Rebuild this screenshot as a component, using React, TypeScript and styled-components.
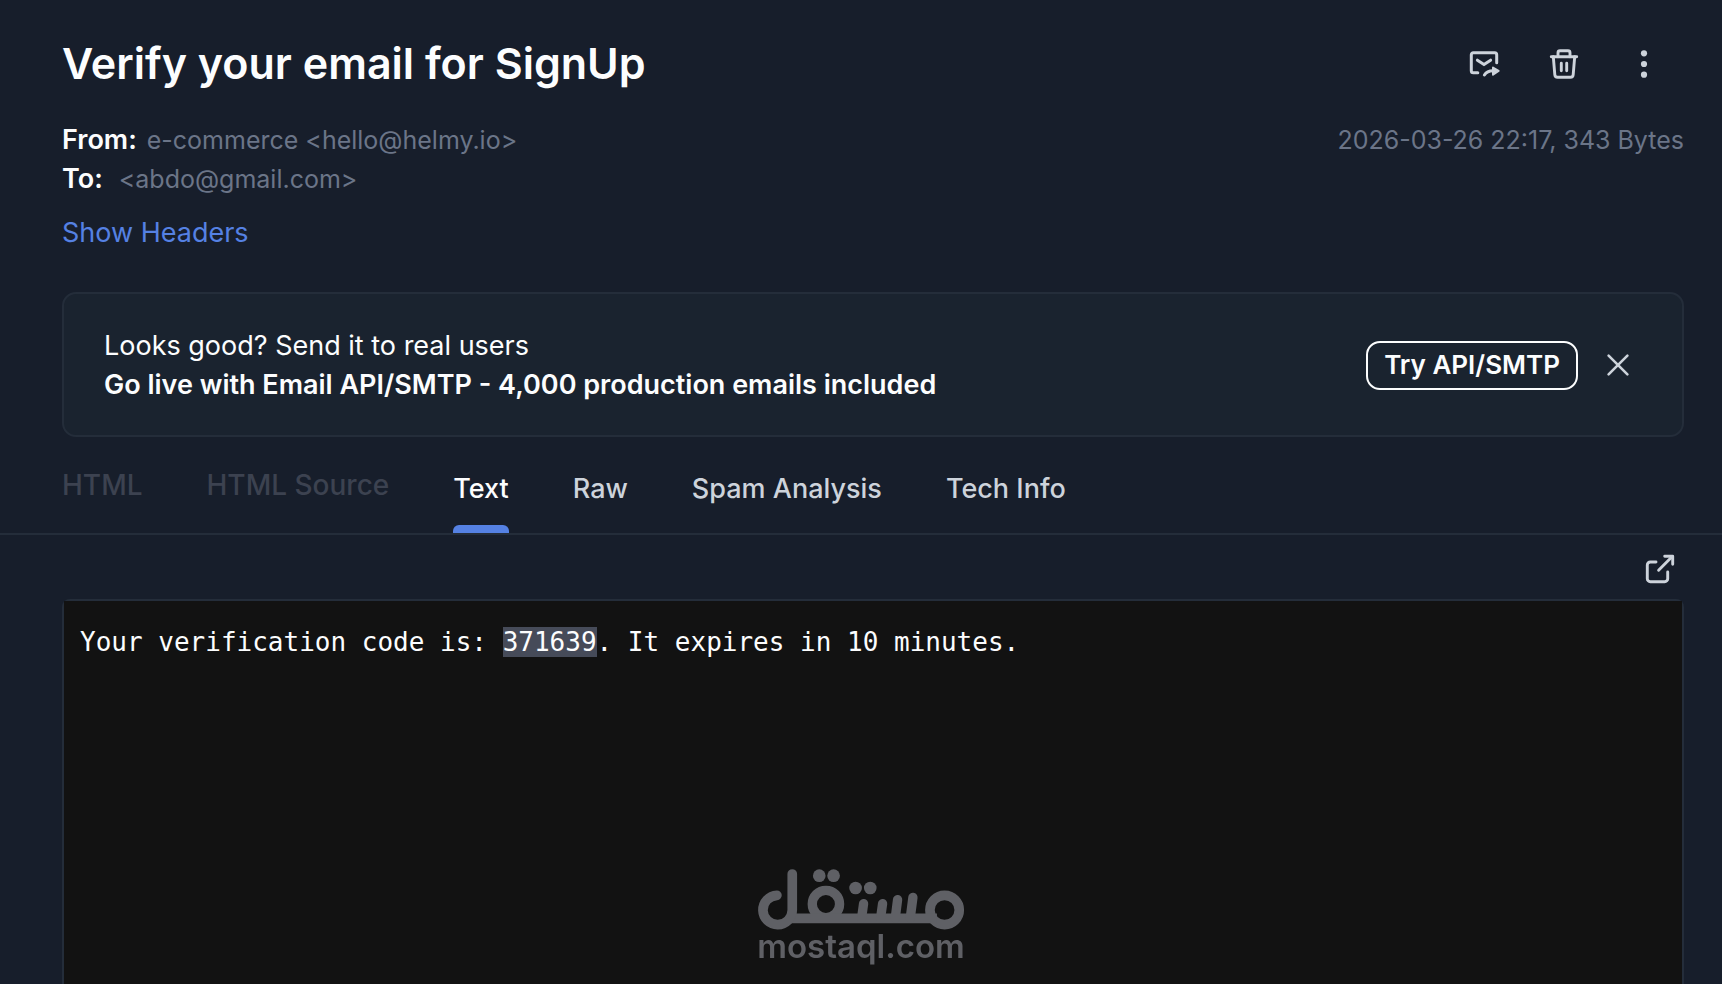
import React from 'react';
import styled, { createGlobalStyle } from 'styled-components';

const color = {
  page: '#171e2b',
  banner: '#1a232f',
  line: '#242d3a',
  code: '#121212',
  white: '#fcfdfe',
  icon: '#cdd3db',
  muted: '#6b7588',
  disabled: '#3c4250',
  accent: '#5581e3',
  selection: '#464b59',
  mark: '#5f6065',
};

const GlobalStyle = createGlobalStyle`
  * { box-sizing: border-box; }
  body {
    margin: 0;
    background: ${color.page};
    color: ${color.white};
    font-family: Inter, "Liberation Sans", sans-serif;
    font-size: 27px;
    line-height: 39px;
  }
`;

const Page = styled.main`
  min-height: 100vh;
  display: flex;
  flex-direction: column;
  overflow: hidden;
`;

const Header = styled.header`
  padding: 31px 38px 0 62px;
`;

const TitleRow = styled.div`
  display: flex;
  align-items: center;
  justify-content: space-between;
`;

const Title = styled.h1`
  margin: 0;
  font-size: 43px;
  line-height: 65px;
  font-weight: 600;
`;

const Actions = styled.div`
  display: flex;
`;

const IconButton = styled.button<{ $width: number }>`
  display: flex;
  align-items: center;
  justify-content: center;
  width: ${(p) => p.$width}px;
  height: 40px;
  padding: 0;
  border: 0;
  background: none;
  color: ${color.icon};
  cursor: pointer;

  svg {
    display: block;
    overflow: visible;
  }
`;

const Meta = styled.div`
  display: flex;
  justify-content: space-between;
  margin-top: 24px;
`;

const Fields = styled.dl`
  margin: 0;
`;

const Field = styled.div<{ $gap: number }>`
  display: flex;
  align-items: baseline;
  gap: ${(p) => p.$gap}px;
  height: 39px;
`;

const Label = styled.dt`
  font-weight: 600;
`;

const Value = styled.dd`
  margin: 0;
  font-size: 25px;
  color: ${color.muted};
`;

const Received = styled.time`
  font-size: 25px;
  line-height: 41px;
  color: ${color.muted};
`;

const HeadersLink = styled.a`
  display: inline-block;
  margin-top: 15px;
  color: ${color.accent};
  text-decoration: none;
`;

const Banner = styled.section`
  display: flex;
  align-items: center;
  justify-content: space-between;
  margin: 40px 38px 0 62px;
  padding: 32px 44px 31px 40px;
  border: 2px solid ${color.line};
  border-radius: 14px;
  background: ${color.banner};
`;

const BannerText = styled.p<{ $strong?: boolean }>`
  margin: 0;
  font-weight: ${(p) => (p.$strong ? 600 : 400)};
`;

const BannerActions = styled.div`
  display: flex;
  align-items: center;
  gap: 20px;
`;

const TryButton = styled.button`
  height: 49px;
  padding: 0 16px;
  border: 2px solid ${color.white};
  border-radius: 14px;
  background: none;
  color: ${color.white};
  font: 600 26px/40px Inter, "Liberation Sans", sans-serif;
  white-space: nowrap;
  cursor: pointer;
`;

const Tabs = styled.nav`
  display: flex;
  gap: 64px;
  height: 98px;
  padding: 0 62px;
  border-bottom: 2px solid ${color.line};
`;

const Tab = styled.button<{ $active?: boolean }>`
  display: flex;
  flex-direction: column;
  justify-content: space-between;
  padding: 32px 0 0;
  border: 0;
  background: none;
  color: ${(p) => (p.$active ? color.white : color.icon)};
  font: 500 27px/39px Inter, "Liberation Sans", sans-serif;
  white-space: nowrap;
  cursor: pointer;

  &::after {
    content: '';
    width: 100%;
    height: 8px;
    border-radius: 6px 6px 0 0;
    background: ${(p) => (p.$active ? color.accent : 'transparent')};
  }

  &:disabled {
    padding-top: 29px;
    color: ${color.disabled};
    font-size: 28px;
    cursor: default;
  }
`;

const Toolbar = styled.div`
  display: flex;
  justify-content: flex-end;
  align-items: flex-end;
  height: 64px;
  padding: 0 42px 10px 62px;
`;

const Message = styled.section`
  display: flex;
  flex-direction: column;
  flex: 1;
  margin: 0 38px 0 62px;
  border: 2px solid ${color.line};
  border-bottom: 0;
  border-radius: 8px 8px 0 0;
`;

const MessageText = styled.pre`
  flex: 1;
  margin: 0;
  padding: 26px 16px;
  background: ${color.code};
  font-family: "DejaVu Sans Mono", "Liberation Mono", monospace;
  font-size: 26px;
  line-height: 30px;
  white-space: pre-wrap;
`;

const Selected = styled.mark`
  background: ${color.selection};
  color: inherit;
`;

const Watermark = styled.div`
  position: fixed;
  left: 50%;
  bottom: 22px;
  transform: translateX(-50%);
  display: flex;
  flex-direction: column;
  align-items: center;
  color: ${color.mark};
  font-size: 33px;
  line-height: 32px;
  font-weight: 600;
`;

const ForwardIcon = () => (
  <svg width="32" height="32" viewBox="0 0 32 32" fill="none" stroke="currentColor" strokeWidth="3" strokeLinecap="round" strokeLinejoin="round" aria-hidden="true">
    <path d="M9.800 24.700H5.300a2 2 0 0 1-2-2v-16a2 2 0 0 1 2-2h21.400a2 2 0 0 1 2 2v8" />
    <path d="M9.400 12.200 16 16.600l6.600-4.400" />
    <path d="M16.400 27c1.600-2.700 4.200-4.300 8.600-4.300" />
    <path d="M25 19.600 30.600 22.900 25 26.600Z" fill="currentColor" strokeWidth="2" />
  </svg>
);

const TrashIcon = () => (
  <svg width="32" height="32" viewBox="0 0 32 32" fill="none" stroke="currentColor" strokeWidth="2.900" strokeLinecap="round" strokeLinejoin="round" aria-hidden="true">
    <path d="M3.300 8.700h25.400" />
    <path d="M10 8.700V4.700a2 2 0 0 1 2-2h8a2 2 0 0 1 2 2v4" />
    <path d="m5.300 8.700 1.500 18a2.800 2.800 0 0 0 2.800 2.600h12.800a2.800 2.800 0 0 0 2.800-2.600l1.500-18" />
    <path d="M13.300 15.300v7.400M18.700 15.300v7.400" />
  </svg>
);

const MoreIcon = () => (
  <svg width="32" height="32" viewBox="0 0 32 32" fill="currentColor" aria-hidden="true">
    <circle cx="16" cy="5.300" r="3.100" />
    <circle cx="16" cy="16" r="3.100" />
    <circle cx="16" cy="26.700" r="3.100" />
  </svg>
);

const CloseIcon = () => (
  <svg width="24" height="24" viewBox="0 0 24 24" fill="none" stroke="currentColor" strokeWidth="2.600" strokeLinecap="round" aria-hidden="true">
    <path d="m2.600 2.600 18.800 18.800M21.400 2.600 2.600 21.400" />
  </svg>
);

const OpenIcon = () => (
  <svg width="32" height="32" viewBox="0 0 32 32" fill="none" stroke="currentColor" strokeWidth="2.900" strokeLinecap="round" strokeLinejoin="round" aria-hidden="true">
    <path d="M12 9H6.300a3 3 0 0 0-3 3v13.700a3 3 0 0 0 3 3h14.400a3 3 0 0 0 3-3V19" />
    <path d="M14.600 17.200 28 3.800" />
    <path d="M20.700 3.200h8v8" />
  </svg>
);

const MarkDrawing = () => (
  <svg width="207" height="61" viewBox="51 57 621 183" fill="none" stroke="currentColor" strokeWidth="29" strokeLinecap="round" aria-hidden="true">
    <circle cx="613" cy="180" r="44" />
    <circle cx="257" cy="162" r="41" strokeWidth="28" />
    <path d="M140 205H590" strokeLinecap="butt" />
    <path d="M110 136a44 44 0 1 0 46 44V72" />
    <path d="M370 161 364 204M427 161 421 204M472 149 465 204M518 142 510 204" strokeWidth="28" />
    <g fill="currentColor" stroke="none">
      <circle cx="237" cy="77" r="19" />
      <circle cx="280" cy="77" r="19" />
      <circle cx="346" cy="114" r="19" />
      <circle cx="390" cy="114" r="19" />
    </g>
  </svg>
);

const tabs = [
  { name: 'HTML', disabled: true },
  { name: 'HTML Source', disabled: true },
  { name: 'Text', active: true },
  { name: 'Raw' },
  { name: 'Spam Analysis' },
  { name: 'Tech Info' },
];

export default function App() {
  return (
    <>
      <GlobalStyle />
      <Page>
        <Header>
          <TitleRow>
            <Title>Verify your email for SignUp</Title>
            <Actions>
              <IconButton $width={80} aria-label="Forward"><ForwardIcon /></IconButton>
              <IconButton $width={80} aria-label="Delete"><TrashIcon /></IconButton>
              <IconButton $width={80} aria-label="More"><MoreIcon /></IconButton>
            </Actions>
          </TitleRow>
          <Meta>
            <Fields>
              <Field $gap={10}>
                <Label>From:</Label>
                <Value>e-commerce &lt;hello@helmy.io&gt;</Value>
              </Field>
              <Field $gap={16}>
                <Label>To:</Label>
                <Value>&lt;abdo@gmail.com&gt;</Value>
              </Field>
            </Fields>
            <Received dateTime="2026-03-26T22:17">2026-03-26 22:17, 343 Bytes</Received>
          </Meta>
          <HeadersLink href="#headers">Show Headers</HeadersLink>
        </Header>
        <Banner>
          <div>
            <BannerText>Looks good? Send it to real users</BannerText>
            <BannerText $strong>Go live with Email API/SMTP - 4,000 production emails included</BannerText>
          </div>
          <BannerActions>
            <TryButton>Try API/SMTP</TryButton>
            <IconButton $width={40} aria-label="Close"><CloseIcon /></IconButton>
          </BannerActions>
        </Banner>
        <Tabs>
          {tabs.map((tab) => (
            <Tab key={tab.name} $active={tab.active} disabled={tab.disabled}>{tab.name}</Tab>
          ))}
        </Tabs>
        <Toolbar>
          <IconButton $width={40} aria-label="Open in new window"><OpenIcon /></IconButton>
        </Toolbar>
        <Message>
          <MessageText>Your verification code is: <Selected>371639</Selected>. It expires in 10 minutes.</MessageText>
        </Message>
        <Watermark>
          <MarkDrawing />
          mostaql.com
        </Watermark>
      </Page>
    </>
  );
}
